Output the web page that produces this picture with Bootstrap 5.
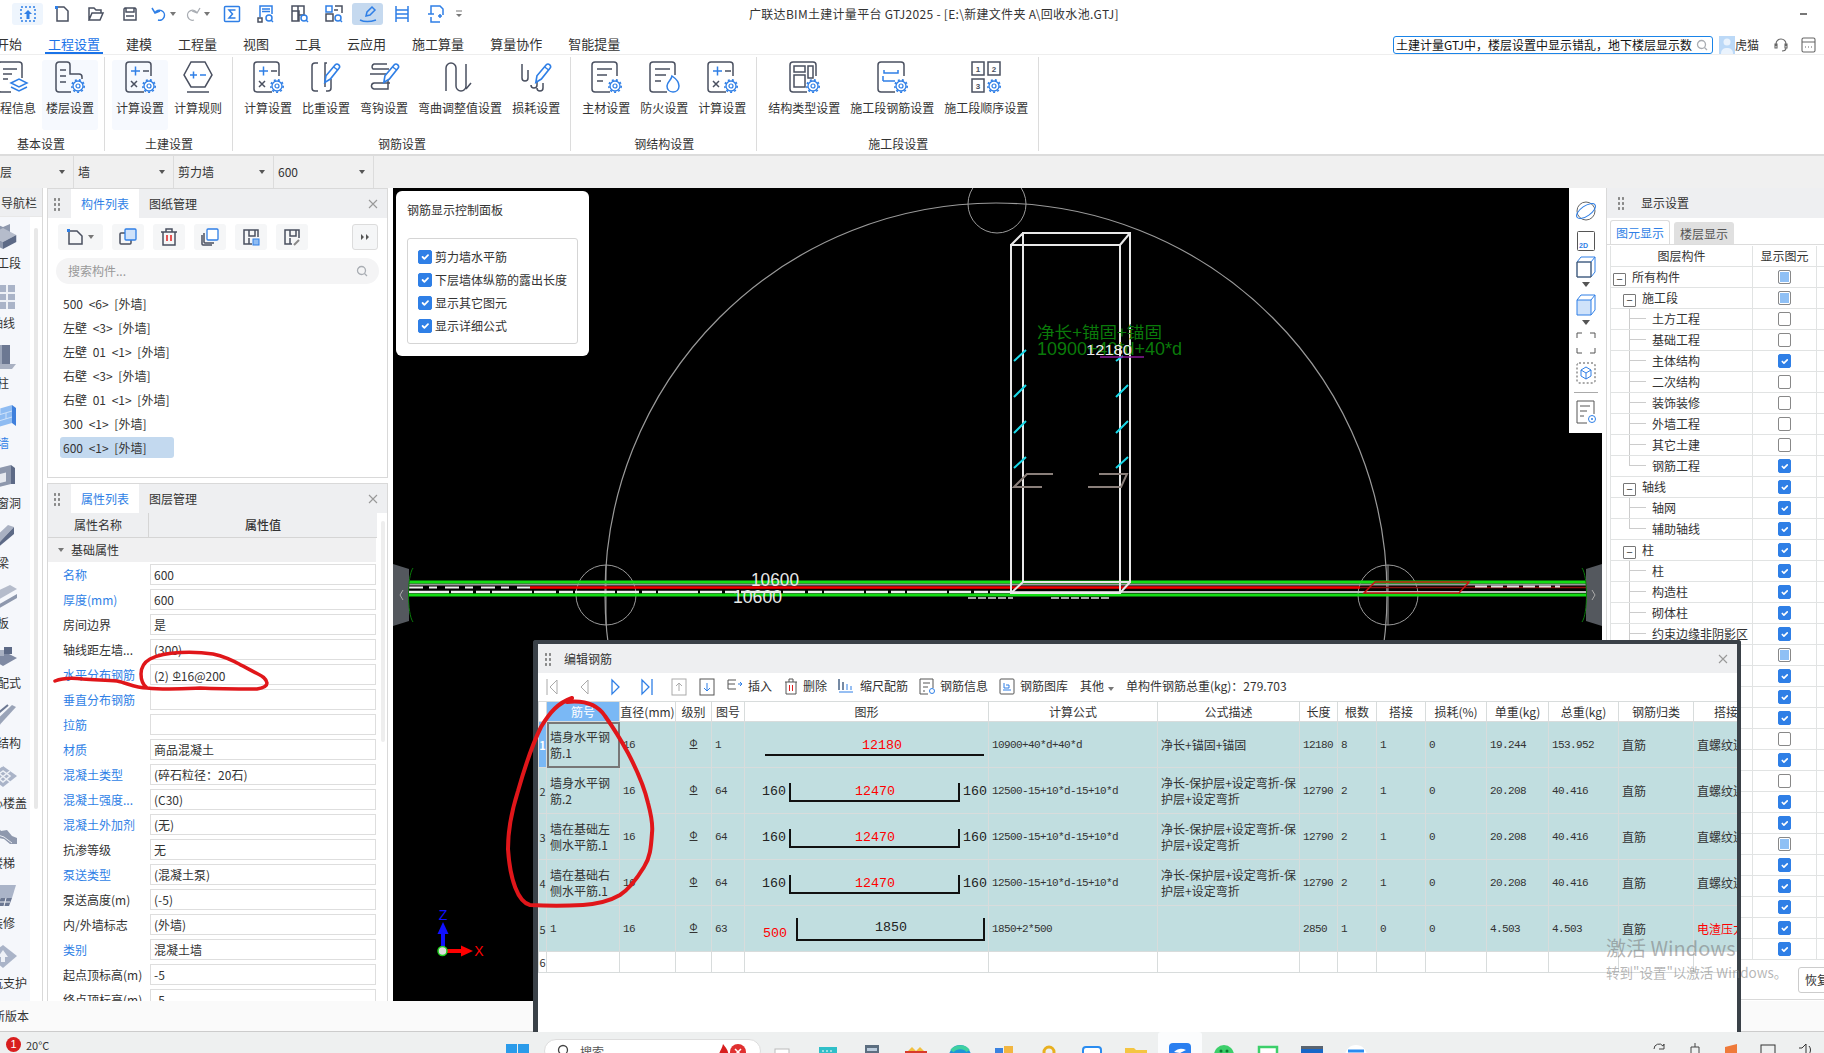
<!doctype html>
<html lang="zh-CN">
<head>
<meta charset="utf-8">
<title>广联达BIM土建计量平台 GTJ2025</title>
<link href="https://cdn.jsdelivr.net/npm/bootstrap@5.3.0/dist/css/bootstrap.min.css" rel="stylesheet">
<style>
html,body{height:100%}
body{width:1824px;height:1053px;overflow:hidden;position:relative;background:#fff;color:#333;font-family:"Noto Sans CJK SC","Liberation Sans",sans-serif;font-size:12px;line-height:16px}
svg{fill:none;flex:none}
.sd{stroke:#4a5060;stroke-width:1.5;fill:none}
.sb{stroke:#2f7fe6;stroke-width:1.5;fill:none}
.sg{stroke:#a9adb3;stroke-width:1.3;fill:none}
.fb{fill:#2f7fe6}.fd{fill:#4a5060}
.sym{font:700 8px "Liberation Sans",sans-serif;fill:#4a5060}
/* title bar */
.titlebar{height:28px}
.qbar{width:470px;gap:0;padding-left:12px}
.qb{width:31px;height:22px;margin-right:3px;border-radius:3px}
.qb-on1{background:#eef5fd}.qb-on2{background:#c5d9ef}
.ddmini{width:0;height:0;border:3px solid transparent;border-top:4px solid #777;margin:3px 0 0 3px}
.apptitle{margin-left:279px;white-space:nowrap;color:#333;font-size:12px;letter-spacing:.3px}
.minbtn{width:7px;height:2px;background:#777;margin-right:17px}
/* menu */
.menubar{height:27px;border-bottom:1px solid #eee}
.menubar .nav-link{padding:0 3px;height:26px;line-height:31px;color:#333;font-size:13px;border-bottom:2px solid transparent}
.menubar .nav-link.active{color:#1a73e8;border-bottom-color:#1a73e8}
.mtabs{margin-left:-7px;gap:20px}
.msearch{width:320px;height:18px;border:1px solid #1a84e8;border-radius:3px;padding:0 4px 0 2px;color:#111;white-space:nowrap;overflow:hidden;margin-top:7px}
.msearch span{overflow:hidden;flex:1}
.avatar{width:16px;height:18px;background:#bcd9f7;margin-left:6px;margin-top:7px}
.uname{width:25px;margin-right:13px;margin-top:7px}
.micon{margin-top:7px}
/* ribbon */
.ribbon{height:101px;border-bottom:2px solid #dcdcdc;overflow:hidden}
.rg{height:94px;margin-top:2px;padding:3px 6px 0 7px;border-right:1px solid #dcdcdc;text-align:center}
.rg-first{margin-left:-23px}
.ritems{gap:2px}
.ri{height:70px;padding:1px 4px 0;border-radius:3px;white-space:nowrap;color:#333}
.ri-on{background:#f6f9fe}
.ri svg{width:34px;height:32px;margin-bottom:7px;margin-left:-8px;margin-right:-8px}
.rgl{margin-top:6px;color:#333}
/* selector */
.selbar{height:32px;background:#f0f0f0}
.sel{width:100px;height:32px;padding:0 4px;border-right:1px solid #dcdcdc;color:#333}
.sel-first{width:74px;padding-left:0}
.caret-d{width:0;height:0;border:3px solid transparent;border-top:4px solid #555;margin-top:3px}
/* main */
.mainarea{height:813px;background:#fff}
.navcol{width:43px;border-right:1px solid #d9d9d9;overflow:hidden}
.navhead{height:29px;line-height:29px;background:#eeeff1;padding-left:1px;border-bottom:1px solid #e8e8e8;white-space:nowrap}
.navbody{height:784px;overflow:hidden}
.navitems{width:30px;background:#f5f7fb;overflow:hidden}
.navit{width:60px;height:60px;margin-left:-27px;padding-top:7px;text-align:center;white-space:nowrap;color:#333}
.navit svg{display:block;margin:0 auto 5px}
.navit-on{color:#2f7fe6}
.navtrack{width:4px;height:581px;background:#e8e8e8;margin:11px 0 0 4px;border-radius:2px}
.leftcol{width:341px;margin-left:4px;margin-right:5px}
.pnl{border:1px solid #d9d9d9;overflow:hidden;background:#fff}
.pnl1{height:290px;margin-bottom:5px}
.pnl2{height:518px;border-bottom:0}
.phead{height:29px;background:#eeeff1;padding-left:5px}
.grip{width:8px;height:14px;margin-right:10px;background:radial-gradient(circle,#888 1.1px,transparent 1.3px) 0 0/4px 5px}
.ptab{height:29px;line-height:29px;width:68px;text-align:center;color:#333}
.ptab-on{background:#fff;color:#2f7fe6}
.ptab-two{margin-left:10px;width:48px}
.xbtn{margin-left:auto;margin-right:8px;width:12px;height:12px}
.ptools{padding:6px 0 0 10px;gap:9px;height:35px}
.tbt{width:32px;height:26px;background:#f5f6f7;border-radius:3px}
.tbt-wide{width:45px;justify-content:flex-start!important;padding-left:8px;gap:4px}
.tbt-more{width:26px;margin-left:35px;border:1px solid #dcdcdc}
.psearch{height:26px;margin:5px 8px 0 8px;border-radius:13px;background:#f4f4f5;color:#999;padding:0 11px 0 12px}
.plist{padding:8px 0 0 12px;margin:0;background:transparent}
.plist .list-group-item{border:0;padding:0 0 0 3px;height:24px;line-height:24px;background:transparent;color:#333;width:114px;white-space:nowrap;border-radius:3px;word-spacing:3px}
.plist .list-group-item.active{background:#c3d9ef;color:#333;height:21px;line-height:21px;margin-top:1px}
.prophead{height:25px;width:329px;background:#eeeff1;border-bottom:1px solid #d5d5d5}
.prophead span:first-child{width:101px;text-align:center;border-right:1px solid #d5d5d5;line-height:24px}
.prophead span:last-child{flex:1;text-align:center;line-height:24px;font-weight:500}
.propwrap{position:relative}
.pscroll{position:absolute;left:333px;top:8px;width:4px;height:221px;background:#eeeeee;border-radius:2px}
.pgroup{height:24px;width:328px;background:#f0f0f1;padding-left:10px;gap:7px}
.caret-s{width:0;height:0;border:3px solid transparent;border-top:4px solid #777;margin-top:3px}
.prow{height:25px;width:328px}
.plabel{width:101px;padding-left:15px;white-space:nowrap;overflow:hidden;color:#333}
.plabel.lk{color:#2f7fe6}
.pval{width:226px;height:21px;border:1px solid #dedede;line-height:19px;padding-left:3px;white-space:nowrap;color:#333;background:#fff;margin-left:1px}
.grade{text-decoration:underline;font-size:10px;vertical-align:2px}
/* canvas */
.canvas{width:1209px;background:#000;position:relative;overflow:hidden}
.canvas>svg{position:absolute;left:0;top:0}
.ctlcard{position:absolute;left:3px;top:3px;width:193px;height:165px;border-radius:6px;border:0;padding:11px 11px}
.ctlbox{margin-top:20px;height:106px;border:1px solid #d5d5d5;border-radius:3px;padding:6px 10px}
.ctlrow{height:23px;gap:3px;white-space:nowrap;margin:0;padding:0;min-height:0}
.ctlrow .form-check-input{float:none;margin:0;width:14px;height:14px;border-radius:2px}
.form-check-input:checked{background-color:#2f7fe6;border-color:#2f7fe6}
.vbar{position:absolute;right:0;top:0;width:33px;height:245px;background:#fff;padding-top:12px}
.vbar svg{display:block;margin:0 auto}
.vdiv{height:1px;background:#aaa;width:24px;margin:8px auto 7px}
.vcaret{width:0;height:0;border:4px solid transparent;border-top:5px solid #555;margin:4px auto 3px}
/* right */
.rightcol{width:218px;margin-left:4px;border-left:1px solid #d9d9d9;overflow:hidden;position:relative}
.rhead{height:30px;background:#eeeff1;padding-left:10px;width:100%}
.rhead .grip{margin-right:16px}
.rtabs{height:27px;padding:2px 0 0 3px;gap:4px;border-bottom:1px solid #dcdcdc;margin-bottom:1px}
.rt1,.rt2{height:24px;line-height:23px;width:60px;text-align:center;border-radius:3px 3px 0 0}
.rt1{border:1px solid #dcdcdc;border-bottom:0;color:#2f7fe6;background:#fff}
.rt2{background:#e0e0e0;color:#555;height:22px;margin-top:2px}
.table.rtb{table-layout:fixed;width:240px;margin:0 0 0 3px;--bs-table-bg:transparent;--bs-table-border-color:#e1e3e3;border-left:1px solid #e1e3e3;border-collapse:separate;border-spacing:0}
.table.rtb>*>*>*{padding:0;height:21px;line-height:20px;border-width:0 1px 1px 0;border-style:solid;border-color:#e1e3e3;color:#333;white-space:nowrap;overflow:hidden;box-shadow:none}
.rtb th{text-align:center;font-weight:400}
.rc1{width:142px}.rc2{width:64px}.rc3{width:34px}
.table.rtb>*>*>.tl{position:relative;text-align:left}
.table.rtb>*>*>.l0{padding-left:2px}.table.rtb>*>*>.l1{padding-left:12px}.table.rtb>*>*>.l2{padding-left:41px}
.tg{display:inline-block;width:13px;height:13px;border:1px solid #777;border-radius:1px;margin-right:6px;line-height:10px;text-align:center;font-style:normal;vertical-align:-2px;font-size:11px;position:relative;background:#fff}
.l2::before{content:"";position:absolute;left:18px;top:0;width:17px;height:50%;border-left:1px solid #ccc;border-bottom:1px solid #ccc}
.l2::after{content:"";position:absolute;left:18px;top:50%;height:50%;border-left:1px solid #ccc}
.l2.lst::after{display:none}
.rtb .form-check-input{float:none;margin:3px auto 0;display:block;width:13px;height:14px;border-radius:2px;border-color:#888}
.rtb .form-check-input:checked{border-color:#2f7fe6}
.part{display:block;width:13px;height:14px;margin:3px auto 0;border:1px solid #888;border-radius:2px;background:#8fc0f5;box-shadow:inset 0 0 0 1px #fff}
.resetrow{height:40px;padding-left:191px;padding-top:7px;border-bottom:1px solid #d9d9d9}
.resetbtn{width:60px;height:26px;padding:0 6px;font-size:12px;line-height:24px;border:1px solid #ccc;border-radius:3px;color:#333;background:#fff;text-align:left;white-space:nowrap}
/* dialog */
.dlg{position:absolute;left:533px;top:640px;width:1208px;height:392px;background:#fff;border:solid #3a4148;border-width:4px 4px 0 5px;border-radius:3px 3px 0 0;z-index:20;overflow:hidden}
.dhead{height:29px;background:#eeeff1;padding-left:6px}
.dhead .grip{margin-right:12px}
.dtools{height:28px;white-space:nowrap;position:relative;color:#333}
.dti{position:absolute;top:5px;line-height:16px}
.table.dtb{table-layout:fixed;width:1244px;margin:0;--bs-table-bg:transparent;--bs-table-border-color:#d8dcdc;border-collapse:collapse}
.table.dtb>*>*>*{padding:0 0 0 3px;border:1px solid #d8dcdc;color:#333;vertical-align:middle;white-space:normal;overflow:hidden;box-shadow:none;line-height:16px;word-break:break-all}
.table.dtb>thead>tr>th{height:20px;text-align:center;font-weight:400;white-space:nowrap;padding:0;background:#fff;line-height:18px}
.dtb tbody tr{height:46px}
.table.dtb tbody tr.cfill>*{background:#c1dee0}
.dtb tbody tr.blank{height:21px}
.table.dtb>*>*>.mn{font-family:"Liberation Mono",monospace;font-size:11px;white-space:nowrap;letter-spacing:-.6px}
.table.dtb>*>*>.nw{white-space:nowrap;font-size:12px}
.table.dtb>*>*>.gr{text-align:center;padding:0;font-family:"Liberation Sans",sans-serif}
.table.dtb>*>*>.rn{padding:0;text-align:center;font-size:11px}
.table.dtb tbody tr>.rn-on{background:#7ab8f5;color:#fff;font-weight:700}
.table.dtb>thead>tr>.hd-on{background:#7ab8f5;color:#fff}
.dtb .sel-cell{outline:2px solid #777;outline-offset:-2px}
.table.dtb>*>*>.red{color:#f00}
.table.dtb>*>*>.sh{padding:0}
.dtb td.sh svg{display:block}
.sht{font:13.3px "Liberation Mono",monospace;fill:#222}
.shr{font:13.3px "Liberation Mono",monospace;fill:#f00}
.c1{width:8px}.c2{width:73px}.c3{width:56px}.c4{width:36px}.c5{width:33px}.c6{width:244px}.c7{width:169px}.c8{width:142px}.c9{width:38px}.c10{width:39px}.c11{width:49px}.c12{width:61px}.c13{width:62px}.c14{width:70px}.c15{width:75px}.c16{width:89px}
/* bottom */
.statusbar{height:31px;background:#fafafa;border-bottom:1px solid #ccc;padding-left:0;line-height:30px;overflow:hidden}
.statusbar span{margin-left:-7px}
.taskbar{height:21px;background:#eef0f0;position:relative;z-index:30;overflow:hidden;padding-top:5px}
.wbadge{width:15px;height:15px;border-radius:50%;background:#d81e1e;color:#fff;text-align:center;font-size:11px;line-height:15px;margin-left:6px;margin-right:5px;font-family:"Liberation Sans",sans-serif;flex:none}
.wtemp{width:28px;font-size:11px;white-space:nowrap;flex:none}
.winlogo{margin-left:452px;margin-top:7px;flex:none}
.tsearch{width:217px;height:24px;margin-left:15px;margin-top:2px;background:#fff;border:1px solid #ddd;border-radius:12px;padding-left:12px;gap:10px;flex:none;color:#555}
.flame{margin-left:auto;margin-right:14px;margin-top:3px}
.tapps{margin-left:1px;flex:none}
.tapp{width:44px;height:24px;flex:none}
.tapp svg{display:block;margin:6px auto 0}
.tapp-on{background:#fbfcfd;border-radius:3px;height:30px;margin-top:-5px}
.tapp-on svg{margin-top:11px}
.ttray{margin-left:auto;gap:22px;padding-right:12px;padding-top:5px}
/* overlays */
.marks{position:absolute;left:0;top:0;width:1824px;height:1053px;z-index:25;pointer-events:none}
.wmark{position:absolute;left:1606px;top:934px;z-index:26;color:rgba(120,120,120,.55);white-space:nowrap;pointer-events:none}
.wm1{font-size:20px;line-height:28px}
.wm2{font-size:13.5px;line-height:20px}
.dti.d1{left:7px}.dti.d2{left:41px}.dti.d3{left:71px}.dti.d4{left:102px}.dti.d5{left:133px}.dti.d6{left:161px}.dti.d7{left:189px}
.dti.t1{left:210px}.dti.d8{left:246px}.dti.t2{left:265px}.dti.d9{left:300px}.dti.t3{left:322px}.dti.d10{left:381px}.dti.t4{left:402px}.dti.d11{left:461px}.dti.t5{left:482px}.dti.t6{left:542px}.dti.t7{left:570px;top:11px}.dti.t8{left:588px}
</style>
</head>
<body class="d-flex flex-column">
<svg width="0" height="0" class="position-absolute">
<defs>
<symbol id="gear" viewBox="0 0 14 14"><circle cx="7" cy="7" r="5" fill="#fff" stroke="#2f7fe6" stroke-width="1.3"/><circle cx="7" cy="7" r="6.2" stroke="#2f7fe6" stroke-width="1.6" stroke-dasharray="2 2.2" fill="none"/><circle cx="7" cy="7" r="2" stroke="#2f7fe6" stroke-width="1.2" fill="none"/></symbol>
<symbol id="pencil" viewBox="0 0 16 20"><path d="M1.500 18.500l1-6L11 2.500a2 2 0 0 1 3 0 2 2 0 0 1 .5 3L6.500 15.500z" fill="#fff" stroke="#2f7fe6" stroke-width="1.5"/><path d="M9.500 4.500l4 3" stroke="#2f7fe6" stroke-width="1.300"/></symbol>
<symbol id="isoblock" viewBox="0 0 30 26"><path d="M0 9 15 1l15 8-15 8z" fill="#b5bccb"/><path d="M0 9l15 8v8L0 17z" fill="#8e98ad"/><path d="M30 9 15 17v8l15-8z" fill="#5d6a86"/></symbol>
</defs>
</svg>

<!-- title bar -->
<div class="titlebar d-flex align-items-center">
  <div class="qbar d-flex align-items-center">
    <div class="qb qb-on1 d-flex align-items-center justify-content-center"><svg width="18" height="18" viewBox="0 0 18 18"><rect x="2" y="2" width="14" height="14" class="sb" stroke-dasharray="2 2"/><path d="M9 5l4 4h-2.500v5h-3V9H5z" class="fb"/></svg></div>
    <div class="qb d-flex align-items-center justify-content-center"><svg width="18" height="18" viewBox="0 0 18 18"><path class="sd" d="M4 2h7l4 4v10H4z"/><path d="M2 1h3v3H2z" class="fb"/></svg></div>
    <div class="qb d-flex align-items-center justify-content-center"><svg width="18" height="18" viewBox="0 0 18 18"><path class="sd" d="M2 15V3h5l2 2h5v3M2 15l3-7h11l-3 7z"/></svg></div>
    <div class="qb d-flex align-items-center justify-content-center"><svg width="18" height="18" viewBox="0 0 18 18"><path class="sd" d="M3 15V4l1-1h10l1 1v11zM5 3v4h8V3M5 11h8"/></svg></div>
    <div class="qb d-flex align-items-center justify-content-center"><svg width="16" height="18" viewBox="0 0 16 18"><path class="sb" d="M4 8a5 5 0 1 1 3 7M1 3l3 5 5-2"/></svg><i class="ddmini"></i></div>
    <div class="qb d-flex align-items-center justify-content-center"><svg width="16" height="18" viewBox="0 0 16 18"><path class="sg" d="M12 8a5 5 0 1 0-3 7M15 3l-3 5-5-2"/></svg><i class="ddmini"></i></div>
    <div class="qb d-flex align-items-center justify-content-center"><svg width="18" height="18" viewBox="0 0 18 18"><rect x="1.500" y="1.500" width="15" height="15" rx="1" class="sb"/><path class="sb" d="M12.500 5H6l3.500 4L6 13h6.500"/></svg></div>
    <div class="qb d-flex align-items-center justify-content-center"><svg width="18" height="18" viewBox="0 0 18 18"><path class="sb" d="M3 12V1h12v8M5 4h8M5 6.500h8"/><rect x="1" y="13" width="4" height="4" class="sd"/><circle cx="12" cy="13" r="3" class="sb"/><path class="sb" d="M14 15l2 2"/></svg></div>
    <div class="qb d-flex align-items-center justify-content-center"><svg width="18" height="18" viewBox="0 0 18 18"><path class="sd" d="M1 1h12v9H8v6H1zM1 6h7v4M7 1v15"/><circle cx="13" cy="13" r="3" class="sb"/><path class="sb" d="M15 15l2 2"/></svg></div>
    <div class="qb d-flex align-items-center justify-content-center"><svg width="18" height="18" viewBox="0 0 18 18"><rect x="1" y="1" width="6" height="6" class="sb"/><path class="sd" d="M10 1h7v7M1 9h7v7H1zM9 5h4"/><circle cx="13" cy="13" r="3" class="sb"/><path class="sb" d="M15 15l2 2"/></svg></div>
    <div class="qb qb-on2 d-flex align-items-center justify-content-center"><svg width="18" height="18" viewBox="0 0 18 18"><path class="sb" d="M1 15c4 2 10 2 16 0M7 11l1-4 5-5 3 3-5 5z"/></svg></div>
    <div class="qb d-flex align-items-center justify-content-center"><svg width="18" height="18" viewBox="0 0 18 18"><path class="sb" d="M3 1v16M15 1v16M3 5h12M3 9h12M3 13h12"/></svg></div>
    <div class="qb d-flex align-items-center justify-content-center"><svg width="18" height="18" viewBox="0 0 18 18"><path class="sb" d="M4 9V1h9l3 3v6M4 12v5h9M13 9v4M11 11h4M1 9h6"/></svg></div>
    <svg width="10" height="12" viewBox="0 0 10 12"><path d="M2 3h6" stroke="#777"/><path d="M2 6l3 3 3-3z" fill="#777"/></svg>
  </div>
  <div class="apptitle">广联达BIM土建计量平台 GTJ2025 - [E:\新建文件夹 A\回收水池.GTJ]</div>
  <div class="minbtn ms-auto"></div>
</div>

<!-- menu bar -->
<div class="menubar d-flex align-items-center">
  <ul class="nav mtabs">
    <li class="nav-item"><a class="nav-link" href="#">开始</a></li>
    <li class="nav-item"><a class="nav-link active" href="#">工程设置</a></li>
    <li class="nav-item"><a class="nav-link" href="#">建模</a></li>
    <li class="nav-item"><a class="nav-link" href="#">工程量</a></li>
    <li class="nav-item"><a class="nav-link" href="#">视图</a></li>
    <li class="nav-item"><a class="nav-link" href="#">工具</a></li>
    <li class="nav-item"><a class="nav-link" href="#">云应用</a></li>
    <li class="nav-item"><a class="nav-link" href="#">施工算量</a></li>
    <li class="nav-item"><a class="nav-link" href="#">算量协作</a></li>
    <li class="nav-item"><a class="nav-link" href="#">智能提量</a></li>
  </ul>
  <div class="msearch d-flex align-items-center ms-auto"><span>土建计量GTJ中，楼层设置中显示错乱，地下楼层显示数</span><svg width="12" height="12" viewBox="0 0 12 12"><circle cx="5.500" cy="5.500" r="4" class="sg"/><path class="sg" d="M8.500 8.500l2.500 2.500"/></svg></div>
  <div class="avatar d-flex justify-content-center"><svg width="12" height="18" viewBox="0 0 12 18"><circle cx="6" cy="6" r="3.500" fill="#eaf3fd"/><path d="M0 18c0-5 3-6 6-6s6 1 6 6z" fill="#eaf3fd"/></svg></div>
  <div class="uname">虎猫</div>
  <svg width="16" height="16" viewBox="0 0 16 16" class="me-2 micon"><path d="M3 9V7a5 5 0 0 1 10 0v2M2 7h2v4H2zM12 7h2v4h-2zM13 11c0 2-2 3-4 3" stroke="#666" stroke-width="1.100" fill="none"/></svg>
  <svg width="15" height="16" viewBox="0 0 15 16" class="ms-1 me-2 micon"><rect x="1" y="1" width="13" height="14" rx="1.500" stroke="#666" stroke-width="1.100"/><path d="M1 5h13M4 10h1M7 10h1M10 10h1" stroke="#666" stroke-width="1.100"/></svg>
</div>

<!-- ribbon -->
<div class="ribbon d-flex">
  <div class="rg rg-first">
    <div class="ritems d-flex">
      <div class="ri d-flex flex-column align-items-center"><svg viewBox="0 0 34 32"><path class="sd" d="M27 17V4a3 3 0 0 0-3-3H6A3 3 0 0 0 3 4v24a3 3 0 0 0 3 3h10"/><path class="sd" d="M8 8h14M8 13h9M8 18h5"/><path class="sb" d="M16 22l8-4 8 4-8 4zM16 26l8 4 8-4"/></svg>工程信息</div>
      <div class="ri ri-on d-flex flex-column align-items-center"><svg viewBox="0 0 34 32"><path class="sd" d="M18 31H6a3 3 0 0 1-3-3V4a3 3 0 0 1 3-3h8a3 3 0 0 1 3 3v9h9a3 3 0 0 1 3 3v2M17 8v5"/><path class="sd" d="M7 9h6M7 15h6M7 21h6"/><use href="#gear" x="18" y="18" width="14" height="14"/></svg>楼层设置</div>
    </div>
    <div class="rgl">基本设置</div>
  </div>
  <div class="rg">
    <div class="ritems d-flex">
      <div class="ri ri-on d-flex flex-column align-items-center"><svg viewBox="0 0 34 32"><path class="sd" d="M28 15V4a3 3 0 0 0-3-3H6A3 3 0 0 0 3 4v24a3 3 0 0 0 3 3h15"/><path class="sb" d="M8 10h9M12.500 5.500v9"/><path class="sd" d="M20 10h6M8 20l6 6M14 20l-6 6"/><use href="#gear" x="19" y="18" width="14" height="14"/></svg>计算设置</div>
      <div class="ri d-flex flex-column align-items-center"><svg viewBox="0 0 34 32"><path class="sd" d="M10 1h14l7 13-7 12H10L3 14zM6 31h22"/><path class="sb" d="M9 14h7M12.500 10.500v7M19 14h6"/></svg>计算规则</div>
    </div>
    <div class="rgl">土建设置</div>
  </div>
  <div class="rg">
    <div class="ritems d-flex">
      <div class="ri d-flex flex-column align-items-center"><svg viewBox="0 0 34 32"><path class="sd" d="M28 15V4a3 3 0 0 0-3-3H6A3 3 0 0 0 3 4v24a3 3 0 0 0 3 3h15"/><path class="sb" d="M8 10h9M12.500 5.500v9"/><path class="sd" d="M20 10h6M8 20l6 6M14 20l-6 6"/><use href="#gear" x="19" y="18" width="14" height="14"/></svg>计算设置</div>
      <div class="ri d-flex flex-column align-items-center"><svg viewBox="0 0 34 32"><path class="sd" d="M9 2H6a3 3 0 0 0-3 3v22a3 3 0 0 0 3 3h3M17 30h2a3 3 0 0 0 3-3V18M18 2h-2v24"/><use href="#pencil" x="14" y="1" width="18" height="22"/></svg>比重设置</div>
      <div class="ri d-flex flex-column align-items-center"><svg viewBox="0 0 34 32"><path class="sd" d="M20 3H7a3 3 0 0 0-1 5h16M3 13h18v15H7a3 3 0 0 1 1-6h15"/><use href="#pencil" x="15" y="1" width="18" height="22"/></svg>弯钩设置</div>
      <div class="ri d-flex flex-column align-items-center"><svg viewBox="0 0 34 32"><path class="sd" d="M3 30V7a5 5 0 0 1 10 0v18a5 5 0 0 0 10 0V3M23 28l5-6"/></svg>弯曲调整值设置</div>
      <div class="ri d-flex flex-column align-items-center"><svg viewBox="0 0 34 32"><path class="sd" d="M3 3v14a3 3 0 0 0 6 0V9M12 24a3 3 0 0 0 6 0v-8M18 27a3 3 0 0 0 6 0V22"/><use href="#pencil" x="15" y="1" width="18" height="22"/></svg>损耗设置</div>
    </div>
    <div class="rgl">钢筋设置</div>
  </div>
  <div class="rg">
    <div class="ritems d-flex">
      <div class="ri d-flex flex-column align-items-center"><svg viewBox="0 0 34 32"><path class="sd" d="M28 15V4a3 3 0 0 0-3-3H6A3 3 0 0 0 3 4v24a3 3 0 0 0 3 3h15"/><path class="sd" d="M8 8h15M8 14h10M8 20h6"/><use href="#gear" x="19" y="18" width="14" height="14"/></svg>主材设置</div>
      <div class="ri d-flex flex-column align-items-center"><svg viewBox="0 0 34 32"><path class="sd" d="M28 14V4a3 3 0 0 0-3-3H6A3 3 0 0 0 3 4v24a3 3 0 0 0 3 3h14"/><path class="sd" d="M8 8h15M8 14h11M8 20h6"/><path class="sb" d="M26 31c-4 0-6-3-6-6 0-4 4-5 5-10 3 2 7 6 7 10 0 4-3 6-6 6z"/></svg>防火设置</div>
      <div class="ri d-flex flex-column align-items-center"><svg viewBox="0 0 34 32"><path class="sd" d="M28 15V4a3 3 0 0 0-3-3H6A3 3 0 0 0 3 4v24a3 3 0 0 0 3 3h15"/><path class="sb" d="M8 10h9M12.500 5.500v9"/><path class="sd" d="M20 10h6M8 20l6 6M14 20l-6 6"/><use href="#gear" x="19" y="18" width="14" height="14"/></svg>计算设置</div>
    </div>
    <div class="rgl">钢结构设置</div>
  </div>
  <div class="rg">
    <div class="ritems d-flex">
      <div class="ri d-flex flex-column align-items-center"><svg viewBox="0 0 34 32"><path class="sd" d="M29 15V4a3 3 0 0 0-3-3H6A3 3 0 0 0 3 4v24a3 3 0 0 0 3 3h14"/><rect x="7" y="5" width="11" height="6" class="sd"/><rect x="21" y="5" width="5" height="12" class="sd"/><rect x="7" y="14" width="11" height="12" class="sd"/><use href="#gear" x="19" y="18" width="14" height="14"/></svg>结构类型设置</div>
      <div class="ri d-flex flex-column align-items-center"><svg viewBox="0 0 34 32"><path class="sd" d="M29 15V4a3 3 0 0 0-3-3H6A3 3 0 0 0 3 4v24a3 3 0 0 0 3 3h14"/><path class="sb" d="M9 9v3h14V9M8 20h12M8 20v-5"/><use href="#gear" x="19" y="18" width="14" height="14"/></svg>施工段钢筋设置</div>
      <div class="ri d-flex flex-column align-items-center"><svg viewBox="0 0 34 32"><rect x="3" y="1" width="12" height="13" class="sd"/><rect x="19" y="1" width="12" height="13" class="sd"/><rect x="3" y="18" width="12" height="13" class="sd"/><text x="9" y="11" text-anchor="middle" class="sym">1</text><text x="25" y="11" text-anchor="middle" class="sym">2</text><text x="9" y="28" text-anchor="middle" class="sym">3</text><use href="#gear" x="18" y="18" width="14" height="14"/></svg>施工段顺序设置</div>
    </div>
    <div class="rgl">施工段设置</div>
  </div>
</div>

<!-- selector bar -->
<div class="selbar d-flex">
  <div class="sel sel-first d-flex align-items-center justify-content-between"><span class="ms-n1">层</span><i class="caret-d me-1"></i></div>
  <div class="sel d-flex align-items-center justify-content-between"><span>墙</span><i class="caret-d me-1"></i></div>
  <div class="sel d-flex align-items-center justify-content-between"><span>剪力墙</span><i class="caret-d me-1"></i></div>
  <div class="sel d-flex align-items-center justify-content-between"><span>600</span><i class="caret-d me-1"></i></div>
</div>

<!-- main -->
<div class="mainarea d-flex">
  <div class="navcol">
    <div class="navhead">导航栏</div>
    <div class="navbody d-flex">
      <div class="navitems">
        <div class="navit"><svg width="30" height="26" viewBox="0 0 30 26"><path d="M8 0l7 3 7-3v8l-7 4-7-4z" fill="#8e98ad"/><use href="#isoblock" y="3" width="30" height="23"/></svg>施工段</div>
        <div class="navit"><svg width="30" height="26" viewBox="0 0 30 26"><rect x="3" y="1" width="24" height="24" fill="#aab4c8"/><path d="M3 9h24M3 17h24M11 1v24M19 1v24" stroke="#eef1f6" stroke-width="2"/></svg>轴线</div>
        <div class="navit"><svg width="30" height="26" viewBox="0 0 30 26"><path d="M8 1h14v19H8z" fill="#6c7892"/><path d="M8 1h6v19H8z" fill="#9aa4b8"/><path d="M2 20h26l-4 5H6z" fill="#a9b1c2"/></svg>柱</div>
        <div class="navit navit-on"><svg width="30" height="26" viewBox="0 0 30 26"><path d="M4 7 24 1v18L4 25z" fill="#8fbcf2"/><path d="M24 1l4 3v18l-4-3z" fill="#3f80dc"/><path d="M4 13l20-6M4 19l20-6M12 4v6M18 9v6M10 16v6" stroke="#cfe2fa"/></svg>墙</div>
        <div class="navit"><svg width="30" height="26" viewBox="0 0 30 26"><path d="M3 6l20-5v19L3 25z" fill="#8e98ad"/><path d="M23 1l4 3v16l-4 0z" fill="#5d6a86"/><path d="M8 11l10-2.500v9L8 20z" fill="#e6e9ef"/></svg>门窗洞</div>
        <div class="navit"><svg width="30" height="26" viewBox="0 0 30 26"><path d="M2 18 20 1l6 2L8 22z" fill="#a9b1c2"/><path d="M8 22 26 3v7L8 25z" fill="#5d6a86"/></svg>梁</div>
        <div class="navit"><svg width="30" height="26" viewBox="0 0 30 26"><path d="M1 11 22 1l7 4L10 16z" fill="#b5bccb"/><path d="M1 15l9 6 19-11v4L10 25l-9-6z" fill="#8e98ad"/></svg>板</div>
        <div class="navit"><svg width="30" height="26" viewBox="0 0 30 26"><path d="M1 14l14-7 14 7-14 8z" fill="#7f8aa3"/><path d="M6 6h10v6H6z" fill="#a9b1c2"/><path d="M16 3h8v7h-8z" fill="#5d6a86"/></svg>装配式</div>
        <div class="navit"><svg width="30" height="26" viewBox="0 0 30 26"><path d="M2 22 24 1l4 2L8 25z" fill="#9aa4b8"/><path d="M2 16 20 1" stroke="#6c7892" stroke-width="2"/></svg>钢结构</div>
        <div class="navit"><svg width="30" height="26" viewBox="0 0 30 26"><path d="M15 2 29 12 15 23 1 12z" fill="#aab4c8"/><path d="M8 7l14 11M15 2l-1 0M22 7 8 18M15 7 8 12l7 6 7-6z" stroke="#eef1f6" stroke-width="1.500"/></svg>空心楼盖</div>
        <div class="navit"><svg width="30" height="26" viewBox="0 0 30 26"><path d="M2 4l6-3 5 6 6-1 5 6 5 2v6H22l-6-5-6-1-5-5-3-1z" fill="#8e98ad"/><path d="M2 4l8 7 6 2 8 6" stroke="#e8ebf1"/></svg>楼梯</div>
        <div class="navit"><svg width="30" height="26" viewBox="0 0 30 26"><path d="M1 14 6 1h22l-4 13z" fill="#aab4c8"/><path d="M1 14h23l-3 8H4z" fill="#6c7892"/><path d="M6 14l-2 8M12 14l-2 8M18 14l-2 8M2 18h20" stroke="#eef1f6"/></svg>装修</div>
        <div class="navit"><svg width="30" height="26" viewBox="0 0 30 26"><path d="M15 1l14 11-14 12L1 12z" fill="#aab4c8"/><path d="M15 6l5 7h-3v5h-4v-5h-3z" fill="#eef1f6"/></svg>基坑支护</div>
      </div>
      <div class="navtrack"></div>
    </div>
  </div>

  <div class="leftcol">
    <div class="pnl pnl1">
      <div class="phead d-flex align-items-center"><i class="grip"></i><div class="ptab ptab-on">构件列表</div><div class="ptab ptab-two">图纸管理</div><svg class="xbtn" viewBox="0 0 12 12"><path d="M2 2l8 8M10 2l-8 8" stroke="#999" stroke-width="1.100"/></svg></div>
      <div class="ptools d-flex">
        <div class="tbt tbt-wide d-flex align-items-center justify-content-center"><svg width="18" height="18" viewBox="0 0 18 18"><path class="sd" d="M3 3h8l5 5v8H3z"/><path d="M1 1h3v3H1z" class="fb"/></svg><i class="caret-s"></i></div>
        <div class="tbt d-flex align-items-center justify-content-center"><svg width="18" height="18" viewBox="0 0 18 18"><rect x="1" y="5" width="11" height="11" rx="1" class="sd"/><rect x="6" y="1" width="11" height="11" rx="1" fill="#cfe2fa" stroke="#2f7fe6" stroke-width="1.300"/></svg></div>
        <div class="tbt d-flex align-items-center justify-content-center"><svg width="18" height="18" viewBox="0 0 18 18"><path class="sd" d="M1 4h16M6 4V1h6v3M3 4v13h12V4"/><path d="M7 7v6M11 7v6" stroke="#e02020" stroke-width="1.500"/></svg></div>
        <div class="tbt d-flex align-items-center justify-content-center"><svg width="18" height="18" viewBox="0 0 18 18"><path class="sd" d="M1 7v9a1 1 0 0 0 1 1h9M3 5v9a1 1 0 0 0 1 1h9"/><rect x="6" y="1" width="11" height="11" rx="1" fill="#fff" stroke="#2f7fe6" stroke-width="1.300"/></svg></div>
        <div class="tbt d-flex align-items-center justify-content-center"><svg width="18" height="18" viewBox="0 0 18 18"><path class="sd" d="M10 16H2V2h14v7M7 2v6h6V2M7 16v-6"/><rect x="11" y="11" width="6" height="6" fill="#8fbcf2" stroke="#2f7fe6"/></svg></div>
        <div class="tbt d-flex align-items-center justify-content-center"><svg width="18" height="18" viewBox="0 0 18 18"><path class="sd" d="M9 16H2V2h14v8M7 2v6h6V2M7 16v-6"/><path d="M11 17l5-5" stroke="#888" stroke-width="2"/></svg></div>
        <div class="tbt tbt-more d-flex align-items-center justify-content-center"><svg width="10" height="8" viewBox="0 0 10 8"><path d="M1 1l3 3-3 3zM6 1l3 3-3 3z" fill="#555"/></svg></div>
      </div>
      <div class="psearch d-flex align-items-center justify-content-between"><span>搜索构件...</span><svg width="12" height="12" viewBox="0 0 12 12"><circle cx="5.500" cy="5.500" r="4" class="sg"/><path class="sg" d="M8.500 8.500l2.500 2.500"/></svg></div>
      <ul class="list-group plist">
        <li class="list-group-item">500 &lt;6&gt; [外墙]</li>
        <li class="list-group-item">左壁 &lt;3&gt; [外墙]</li>
        <li class="list-group-item">左壁 01 &lt;1&gt; [外墙]</li>
        <li class="list-group-item">右壁 &lt;3&gt; [外墙]</li>
        <li class="list-group-item">右壁 01 &lt;1&gt; [外墙]</li>
        <li class="list-group-item">300 &lt;1&gt; [外墙]</li>
        <li class="list-group-item active">600 &lt;1&gt; [外墙]</li>
      </ul>
    </div>
    <div class="pnl pnl2">
      <div class="phead d-flex align-items-center"><i class="grip"></i><div class="ptab ptab-on">属性列表</div><div class="ptab ptab-two">图层管理</div><svg class="xbtn" viewBox="0 0 12 12"><path d="M2 2l8 8M10 2l-8 8" stroke="#999" stroke-width="1.100"/></svg></div>
      <div class="propwrap">
        <div class="pscroll"></div>
        <div class="prophead d-flex"><span>属性名称</span><span>属性值</span></div>
        <div class="pgroup d-flex align-items-center"><i class="caret-s"></i>基础属性</div>
        <div class="prow d-flex align-items-center"><div class="plabel lk">名称</div><div class="pval">600</div></div>
        <div class="prow d-flex align-items-center"><div class="plabel lk">厚度(mm)</div><div class="pval">600</div></div>
        <div class="prow d-flex align-items-center"><div class="plabel">房间边界</div><div class="pval">是</div></div>
        <div class="prow d-flex align-items-center"><div class="plabel">轴线距左墙...</div><div class="pval">(300)</div></div>
        <div class="prow d-flex align-items-center"><div class="plabel lk">水平分布钢筋</div><div class="pval">(2)<span class="grade ms-1">Φ</span>16@200</div></div>
        <div class="prow d-flex align-items-center"><div class="plabel lk">垂直分布钢筋</div><div class="pval"></div></div>
        <div class="prow d-flex align-items-center"><div class="plabel lk">拉筋</div><div class="pval"></div></div>
        <div class="prow d-flex align-items-center"><div class="plabel lk">材质</div><div class="pval">商品混凝土</div></div>
        <div class="prow d-flex align-items-center"><div class="plabel lk">混凝土类型</div><div class="pval">(碎石粒径：20石)</div></div>
        <div class="prow d-flex align-items-center"><div class="plabel lk">混凝土强度...</div><div class="pval">(C30)</div></div>
        <div class="prow d-flex align-items-center"><div class="plabel lk">混凝土外加剂</div><div class="pval">(无)</div></div>
        <div class="prow d-flex align-items-center"><div class="plabel">抗渗等级</div><div class="pval">无</div></div>
        <div class="prow d-flex align-items-center"><div class="plabel lk">泵送类型</div><div class="pval">(混凝土泵)</div></div>
        <div class="prow d-flex align-items-center"><div class="plabel">泵送高度(m)</div><div class="pval">(-5)</div></div>
        <div class="prow d-flex align-items-center"><div class="plabel">内/外墙标志</div><div class="pval">(外墙)</div></div>
        <div class="prow d-flex align-items-center"><div class="plabel lk">类别</div><div class="pval">混凝土墙</div></div>
        <div class="prow d-flex align-items-center"><div class="plabel">起点顶标高(m)</div><div class="pval">-5</div></div>
        <div class="prow d-flex align-items-center"><div class="plabel">终点顶标高(m)</div><div class="pval">-5</div></div>
      </div>
    </div>
  </div>

  <div class="canvas">
    <svg width="1209" height="813" viewBox="393 188 1209 813">
      <circle cx="996" cy="594" r="391" stroke="#9a9a9a" stroke-width="1.200"/>
      <circle cx="997" cy="204" r="29" stroke="#9a9a9a"/>
      <ellipse cx="606" cy="595" rx="30" ry="30" stroke="#9a9a9a"/>
      <ellipse cx="1388" cy="595" rx="30" ry="30" stroke="#9a9a9a"/>
      <path d="M606 565v60M1388 565v60" stroke="#9a9a9a"/>
      <path d="M409 584.500H1586" stroke="#9a9a9a" stroke-width="2"/>
      <path d="M409 592H1011" stroke="#eee" stroke-width="2.500" stroke-dasharray="40 2 22 3 14 2"/>
      <path d="M1011 592H1586" stroke="#bbb" stroke-width="2"/>
      <path d="M409 587.500H530" stroke="#eee" stroke-width="2" stroke-dasharray="14 6 8 8"/>
      <path d="M530 587.500H1360" stroke="#f00000" stroke-width="2.500"/>
      <path d="M1360 587.500H1586" stroke="#8a1010" stroke-width="1.500"/>
      <path d="M1475 586.500H1560" stroke="#ddd" stroke-width="2" stroke-dasharray="12 4"/>
      <path d="M409 582H1586M409 595H1586" stroke="#14dc14" stroke-width="3"/>
      <path d="M968 598h45M1051 598h58" stroke="#ddd" stroke-width="1.500" stroke-dasharray="8 2"/>
      <path d="M1364 593l11-11h94l-10 11z" stroke="#c81212" stroke-width="1.500"/>
      <g stroke="#e8e8e8" stroke-width="2"><path d="M1011 245h109v348h-109zM1023 233h107v349h-107zM1011 245l12-12M1120 245l10-12M1011 593l12-11M1120 593l10-11"/></g>
      <g stroke="#18d8e8" stroke-width="2"><path d="M1014 361l12-11M1014 397l12-12M1014 433l12-12M1014 468l12-11M1116 361l7-5M1116 397l12-12M1116 433l12-12M1116 468l12-11"/></g>
      <path d="M1053 474h-26l-13 13h28M1088 487h33l6-13h-28" stroke="#8a7f7a" stroke-width="2"/>
      <text x="1037" y="338" fill="#0a7a0a" font-family="Noto Sans CJK SC,sans-serif" font-size="16" textLength="125" lengthAdjust="spacingAndGlyphs">净长+锚固+锚固</text>
      <text x="1037" y="355" fill="#0a7a0a" font-family="Liberation Sans,sans-serif" font-size="18" textLength="145" lengthAdjust="spacingAndGlyphs">10900+40*d+40*d</text>
      <text x="1086" y="355" fill="#eee" font-family="Liberation Sans,sans-serif" font-size="15" textLength="46" lengthAdjust="spacingAndGlyphs">12180</text>
      <path d="M1100 357h44" stroke="#8a1a9a" stroke-width="1.500"/>
      <text x="751" y="586" fill="#e8e8e8" font-family="Liberation Sans,sans-serif" font-size="18" textLength="48" lengthAdjust="spacingAndGlyphs">10600</text>
      <text x="733" y="603" fill="#e8e8e8" font-family="Liberation Sans,sans-serif" font-size="18" textLength="49" lengthAdjust="spacingAndGlyphs">10600</text>
      <path d="M393 564l16 5v52l-16 5z" fill="#54585e"/>
      <path d="M403 590l-3 5 3 5" stroke="#aaa"/>
      <path d="M1602 564l-16 5v52l16 5z" fill="#54585e"/>
      <path d="M1592 590l3 5-3 5" stroke="#aaa"/>
      <path d="M413 568c-6 8-6 46 0 54M1582 568c6 8 6 46 0 54" stroke="#0a7a0a"/>
      <path d="M443 950v-22" stroke="#1010ff" stroke-width="4"/><path d="M443 922l-5.500 12h11z" fill="#1010ff"/>
      <path d="M446 951h18" stroke="#f00" stroke-width="4"/><path d="M473 951l-12-5.500v11z" fill="#f00"/>
      <circle cx="442.500" cy="951" r="4.500" fill="#ddd" stroke="#1ed01e" stroke-width="1.500"/>
      <text x="443" y="920" text-anchor="middle" fill="#1010ff" font-family="Liberation Sans,sans-serif" font-size="14">Z</text>
      <text x="479" y="956" text-anchor="middle" fill="#f00" font-family="Liberation Sans,sans-serif" font-size="14">X</text>
    </svg>
    <div class="card ctlcard">
      <div>钢筋显示控制面板</div>
      <div class="ctlbox">
        <label class="form-check ctlrow d-flex align-items-center"><input class="form-check-input" type="checkbox" checked>剪力墙水平筋</label>
        <label class="form-check ctlrow d-flex align-items-center"><input class="form-check-input" type="checkbox" checked>下层墙体纵筋的露出长度</label>
        <label class="form-check ctlrow d-flex align-items-center"><input class="form-check-input" type="checkbox" checked>显示其它图元</label>
        <label class="form-check ctlrow d-flex align-items-center"><input class="form-check-input" type="checkbox" checked>显示详细公式</label>
      </div>
    </div>
    <div class="vbar">
      <svg width="22" height="22" viewBox="0 0 22 22"><ellipse cx="11" cy="11" rx="9" ry="9" stroke="#666"/><ellipse cx="11" cy="11" rx="11" ry="5" transform="rotate(-35 11 11)" stroke="#2f7fe6"/></svg>
      <svg class="mt-2" width="20" height="22" viewBox="0 0 20 22"><rect x="1.500" y="1.500" width="17" height="19" rx="1" stroke="#555"/><text x="3" y="18" font-family="Liberation Sans,sans-serif" font-size="7" font-weight="700" fill="#2f7fe6">2D</text></svg>
      <svg class="mt-1" width="20" height="22" viewBox="0 0 20 22"><path d="M1 6h14v15H1zM1 6l4-5h14l-4 5M15 21l4-5V1" stroke="#2f7fe6"/><path d="M1 6h14v15H1z" stroke="#555"/></svg>
      <div class="vcaret"></div>
      <svg width="20" height="22" viewBox="0 0 20 22"><path d="M1 6h14v15H1z" fill="#cfe2fa" stroke="#2f7fe6"/><path d="M1 6l4-5h14l-4 5M15 21l4-5V1" stroke="#2f7fe6"/></svg>
      <div class="vcaret"></div>
      <svg width="20" height="22" viewBox="0 0 20 22"><path d="M1 6V1h5M14 1h5v5M19 16v5h-5M6 21H1v-5" stroke="#555"/></svg>
      <svg class="mt-2" width="20" height="22" viewBox="0 0 20 22"><rect x="1" y="1" width="18" height="20" rx="2" stroke="#555" stroke-dasharray="2 2"/><path d="M10 5l5 3v6l-5 3-5-3V8zM5 8l5 3 5-3M10 11v6" stroke="#2f7fe6"/></svg>
      <div class="vdiv"></div>
      <svg width="22" height="24" viewBox="0 0 22 24"><path d="M19 14V1H2v22h10M5 6h10M5 11h7M5 16h4" stroke="#555"/><circle cx="17" cy="19" r="3.500" stroke="#2f7fe6"/><circle cx="17" cy="19" r="1" fill="#2f7fe6"/></svg>
    </div>
  </div>

  <div class="rightcol">
    <div class="rhead d-flex align-items-center"><i class="grip"></i>显示设置</div>
    <div class="rtabs d-flex"><div class="rt1">图元显示</div><div class="rt2">楼层显示</div></div>
    <table class="table rtb">
      <colgroup><col class="rc1"><col class="rc2"><col class="rc3"></colgroup>
      <thead><tr><th>图层构件</th><th>显示图元</th><th></th></tr></thead>
      <tbody>
        <tr><td class="tl l0"><i class="tg">−</i>所有构件</td><td><span class="part"></span></td><td></td></tr>
        <tr><td class="tl l1"><i class="tg">−</i>施工段</td><td><span class="part"></span></td><td></td></tr>
        <tr><td class="tl l2">土方工程</td><td><input class="form-check-input" type="checkbox"></td><td></td></tr>
        <tr><td class="tl l2">基础工程</td><td><input class="form-check-input" type="checkbox"></td><td></td></tr>
        <tr><td class="tl l2">主体结构</td><td><input class="form-check-input" type="checkbox" checked></td><td></td></tr>
        <tr><td class="tl l2">二次结构</td><td><input class="form-check-input" type="checkbox"></td><td></td></tr>
        <tr><td class="tl l2">装饰装修</td><td><input class="form-check-input" type="checkbox"></td><td></td></tr>
        <tr><td class="tl l2">外墙工程</td><td><input class="form-check-input" type="checkbox"></td><td></td></tr>
        <tr><td class="tl l2">其它土建</td><td><input class="form-check-input" type="checkbox"></td><td></td></tr>
        <tr><td class="tl l2 lst">钢筋工程</td><td><input class="form-check-input" type="checkbox" checked></td><td></td></tr>
        <tr><td class="tl l1"><i class="tg">−</i>轴线</td><td><input class="form-check-input" type="checkbox" checked></td><td></td></tr>
        <tr><td class="tl l2">轴网</td><td><input class="form-check-input" type="checkbox" checked></td><td></td></tr>
        <tr><td class="tl l2 lst">辅助轴线</td><td><input class="form-check-input" type="checkbox" checked></td><td></td></tr>
        <tr><td class="tl l1"><i class="tg">−</i>柱</td><td><input class="form-check-input" type="checkbox" checked></td><td></td></tr>
        <tr><td class="tl l2">柱</td><td><input class="form-check-input" type="checkbox" checked></td><td></td></tr>
        <tr><td class="tl l2">构造柱</td><td><input class="form-check-input" type="checkbox" checked></td><td></td></tr>
        <tr><td class="tl l2">砌体柱</td><td><input class="form-check-input" type="checkbox" checked></td><td></td></tr>
        <tr><td class="tl l2">约束边缘非阴影区</td><td><input class="form-check-input" type="checkbox" checked></td><td></td></tr>
        <tr><td class="tl"></td><td><span class="part"></span></td><td></td></tr>
        <tr><td class="tl"></td><td><input class="form-check-input" type="checkbox" checked></td><td></td></tr>
        <tr><td class="tl"></td><td><input class="form-check-input" type="checkbox" checked></td><td></td></tr>
        <tr><td class="tl"></td><td><input class="form-check-input" type="checkbox" checked></td><td></td></tr>
        <tr><td class="tl"></td><td><input class="form-check-input" type="checkbox"></td><td></td></tr>
        <tr><td class="tl"></td><td><input class="form-check-input" type="checkbox" checked></td><td></td></tr>
        <tr><td class="tl"></td><td><input class="form-check-input" type="checkbox"></td><td></td></tr>
        <tr><td class="tl"></td><td><input class="form-check-input" type="checkbox" checked></td><td></td></tr>
        <tr><td class="tl"></td><td><input class="form-check-input" type="checkbox" checked></td><td></td></tr>
        <tr><td class="tl"></td><td><span class="part"></span></td><td></td></tr>
        <tr><td class="tl"></td><td><input class="form-check-input" type="checkbox" checked></td><td></td></tr>
        <tr><td class="tl"></td><td><input class="form-check-input" type="checkbox" checked></td><td></td></tr>
        <tr><td class="tl"></td><td><input class="form-check-input" type="checkbox" checked></td><td></td></tr>
        <tr><td class="tl"></td><td><input class="form-check-input" type="checkbox" checked></td><td></td></tr>
        <tr><td class="tl"></td><td><input class="form-check-input" type="checkbox" checked></td><td></td></tr>
      </tbody>
    </table>
    <div class="resetrow"><button class="btn resetbtn" type="button">恢复默认</button></div>
  </div>
</div>

<div class="statusbar"><span>新版本</span></div>
<div class="taskbar d-flex">
  <div class="wbadge">1</div><div class="wtemp">20°C</div>
  <svg class="winlogo" width="23" height="23" viewBox="0 0 23 23"><path d="M0 0h11v11H0zM12 0h11v11H12zM0 12h11v11H0zM12 12h11v11H12z" fill="#2a9bea"/></svg>
  <div class="tsearch d-flex align-items-start"><svg class="mt-1" width="13" height="13" viewBox="0 0 13 13"><circle cx="6" cy="6" r="4.500" stroke="#444" stroke-width="1.300"/></svg><span class="mt-1">搜索</span>
    <svg class="flame" width="30" height="18" viewBox="0 0 30 18"><path d="M3 18C1 10 6 7 7 1c3 4 7 7 5 17z" fill="#d81e1e"/><circle cx="22" cy="9" r="8" fill="#e03030"/><path d="M19 6l6 6M25 6l-6 6" stroke="#fff" stroke-width="1.500"/></svg>
  </div>
  <div class="tapps d-flex">
    <div class="tapp"><svg width="22" height="22" viewBox="0 0 22 22"><rect x="2" y="6" width="14" height="16" fill="#fff" stroke="#bbb"/><rect x="8" y="10" width="12" height="12" fill="#555"/></svg></div>
    <div class="tapp"><svg width="22" height="22" viewBox="0 0 22 22"><rect x="2" y="4" width="18" height="18" fill="#2fbfc8"/><path d="M5 8h2M9 8h2M13 8h2" stroke="#fff"/></svg></div>
    <div class="tapp"><svg width="22" height="22" viewBox="0 0 22 22"><rect x="4" y="2" width="14" height="20" fill="#5c6e80"/><rect x="6" y="5" width="10" height="3" fill="#bcd"/></svg></div>
    <div class="tapp"><svg width="24" height="22" viewBox="0 0 24 22"><rect x="1" y="8" width="22" height="14" fill="#d83a2a"/><path d="M4 8l4-4 4 4 4-4 4 4" fill="#f2c040"/></svg></div>
    <div class="tapp"><svg width="22" height="22" viewBox="0 0 22 22"><circle cx="11" cy="13" r="11" fill="#1d96d8"/><path d="M3 8c4-5 13-5 16 0" stroke="#3fd0a0" stroke-width="4"/></svg></div>
    <div class="tapp"><svg width="22" height="22" viewBox="0 0 22 22"><rect x="2" y="5" width="8" height="17" fill="#3a82e0"/><rect x="11" y="3" width="9" height="19" fill="#f2b640"/></svg></div>
    <div class="tapp"><svg width="20" height="22" viewBox="0 0 20 22"><circle cx="11" cy="9" r="5" stroke="#e8b020" stroke-width="3"/><path d="M8 13l-5 8" stroke="#e8b020" stroke-width="3"/></svg></div>
    <div class="tapp"><svg width="22" height="22" viewBox="0 0 22 22"><rect x="2" y="4" width="18" height="18" rx="3" fill="#fff" stroke="#2a8cf0" stroke-width="2"/></svg></div>
    <div class="tapp"><svg width="24" height="22" viewBox="0 0 24 22"><path d="M1 5h9l2 2h11v15H1z" fill="#f4c542"/></svg></div>
    <div class="tapp tapp-on"><svg width="22" height="22" viewBox="0 0 22 22"><rect x="0" y="0" width="22" height="22" rx="4" fill="#2a7ff0"/><path d="M5 9c4-4 8-4 12-2l-6 3z" fill="#fff"/></svg></div>
    <div class="tapp"><svg width="20" height="22" viewBox="0 0 20 22"><circle cx="10" cy="12" r="10" fill="#3ccf6a"/><circle cx="7" cy="8" r="1.500" fill="#0a7a30"/><circle cx="13" cy="8" r="1.500" fill="#0a7a30"/></svg></div>
    <div class="tapp"><svg width="22" height="22" viewBox="0 0 22 22"><rect x="2" y="4" width="18" height="18" fill="#fff" stroke="#3ccf6a" stroke-width="2.500"/></svg></div>
    <div class="tapp"><svg width="24" height="22" viewBox="0 0 24 22"><rect x="1" y="3" width="22" height="19" fill="#1767c8"/><rect x="1" y="3" width="22" height="3" fill="#5a6470"/></svg></div>
    <div class="tapp"><svg width="22" height="22" viewBox="0 0 22 22"><circle cx="11" cy="13" r="11" fill="#fff"/><path d="M3 8h16" stroke="#2a8cf0" stroke-width="3"/></svg></div>
  </div>
  <div class="ttray d-flex">
    <svg width="14" height="14" viewBox="0 0 14 14"><path d="M2 7a5 5 0 0 1 9-3l1-2v5H7" stroke="#444"/></svg>
    <svg width="14" height="14" viewBox="0 0 14 14"><path d="M3 5h8v9H3zM7 1v4" stroke="#444"/></svg>
    <svg width="14" height="14" viewBox="0 0 14 14"><path d="M1 5l12-3v12H1z" fill="#ef7a3a"/></svg>
    <svg width="16" height="14" viewBox="0 0 16 14"><rect x="1" y="3" width="14" height="11" stroke="#333"/></svg>
    <svg width="14" height="14" viewBox="0 0 14 14"><path d="M1 6h3l4-4v12M11 4c2 2 2 6 0 8" stroke="#333"/></svg>
  </div>
</div>

<!-- rebar dialog -->
<div class="dlg">
  <div class="dhead d-flex align-items-center"><i class="grip"></i>编辑钢筋<svg class="xbtn" viewBox="0 0 12 12"><path d="M2 2l8 8M10 2l-8 8" stroke="#999" stroke-width="1.100"/></svg></div>
  <div class="dtools">
    <svg class="dti d1" width="14" height="18" viewBox="0 0 14 18"><path d="M2 1v16M12 2L5 9l7 7z" stroke="#aaa"/></svg>
    <svg class="dti d2" width="12" height="18" viewBox="0 0 12 18"><path d="M9 2L2 9l7 7z" stroke="#aaa"/></svg>
    <svg class="dti d3" width="12" height="18" viewBox="0 0 12 18"><path d="M3 2l7 7-7 7z" stroke="#2f7fe6" stroke-width="1.300"/></svg>
    <svg class="dti d4" width="14" height="18" viewBox="0 0 14 18"><path d="M2 2l7 7-7 7zM12 1v16" stroke="#2f7fe6" stroke-width="1.300"/></svg>
    <svg class="dti d5" width="16" height="18" viewBox="0 0 16 18"><rect x="1" y="1" width="14" height="16" stroke="#aaa"/><path d="M8 13V5M5 8l3-3 3 3" stroke="#aaa"/></svg>
    <svg class="dti d6" width="16" height="18" viewBox="0 0 16 18"><rect x="1" y="1" width="14" height="16" stroke="#555"/><path d="M8 5v8M5 10l3 3 3-3" stroke="#2f7fe6"/></svg>
    <svg class="dti d7" width="16" height="16" viewBox="0 0 16 16"><path d="M9 2H1v9h8M1 6h7" stroke="#555"/><path d="M11 6h4M13 4l2 2-2 2" stroke="#2f7fe6"/></svg>
    <span class="dti t1">插入</span>
    <svg class="dti d8" width="14" height="17" viewBox="0 0 14 17"><path d="M1 4h12M5 4V1h4v3M2 4v12h10V4" stroke="#555"/><path d="M5.500 7v6M8.500 7v6" stroke="#e02020"/></svg>
    <span class="dti t2">删除</span>
    <svg class="dti d9" width="16" height="16" viewBox="0 0 16 16"><path d="M1 1v11M5 4v8M9 6v6M13 8v4M1 14h14" stroke="#2f7fe6"/><path d="M1 1v11M5 4v8" stroke="#555"/></svg>
    <span class="dti t3">缩尺配筋</span>
    <svg class="dti d10" width="16" height="17" viewBox="0 0 16 17"><path d="M14 10V1H1v15h8M4 5h7M4 9h5M4 13h2" stroke="#555"/><circle cx="13" cy="13" r="2.500" stroke="#2f7fe6"/></svg>
    <span class="dti t4">钢筋信息</span>
    <svg class="dti d11" width="16" height="17" viewBox="0 0 16 17"><rect x="1" y="1" width="14" height="15" rx="1" stroke="#555"/><path d="M4 12h8M5 5v5h5V7H7" stroke="#2f7fe6"/></svg>
    <span class="dti t5">钢筋图库</span>
    <span class="dti t6">其他</span><i class="dti caret-s t7"></i>
    <span class="dti t8">单构件钢筋总重(kg)：279.703</span>
  </div>
  <table class="table dtb">
    <colgroup><col class="c1"><col class="c2"><col class="c3"><col class="c4"><col class="c5"><col class="c6"><col class="c7"><col class="c8"><col class="c9"><col class="c10"><col class="c11"><col class="c12"><col class="c13"><col class="c14"><col class="c15"><col class="c16"></colgroup>
    <thead><tr><th></th><th class="hd-on">筋号</th><th>直径(mm)</th><th>级别</th><th>图号</th><th>图形</th><th>计算公式</th><th>公式描述</th><th>长度</th><th>根数</th><th>搭接</th><th>损耗(%)</th><th>单重(kg)</th><th>总重(kg)</th><th>钢筋归类</th><th>搭接形式</th></tr></thead>
    <tbody>
      <tr class="cfill"><td class="rn rn-on">1</td><td class="sel-cell">墙身水平钢筋.1</td><td class="mn">16</td><td class="gr"><span class="grade">Φ</span></td><td class="mn">1</td>
        <td class="sh"><svg width="244" height="45" viewBox="0 0 244 45"><text class="shr" x="137" y="27" text-anchor="middle">12180</text><path d="M20 33h219" stroke="#111" stroke-width="2"/></svg></td>
        <td class="mn">10900+40*d+40*d</td><td>净长+锚固+锚固</td><td class="mn">12180</td><td class="mn">8</td><td class="mn">1</td><td class="mn">0</td><td class="mn">19.244</td><td class="mn">153.952</td><td class="nw">直筋</td><td class="nw">直螺纹连接</td></tr>
      <tr class="cfill"><td class="rn">2</td><td>墙身水平钢筋.2</td><td class="mn">16</td><td class="gr"><span class="grade">Φ</span></td><td class="mn">64</td>
        <td class="sh"><svg width="244" height="45" viewBox="0 0 244 45"><text class="sht" x="17" y="27">160</text><text class="shr" x="130" y="27" text-anchor="middle">12470</text><text class="sht" x="218" y="27">160</text><path d="M45 15v18h169V15" stroke="#111" stroke-width="2"/></svg></td>
        <td class="mn">12500-15+10*d-15+10*d</td><td>净长-保护层+设定弯折-保护层+设定弯折</td><td class="mn">12790</td><td class="mn">2</td><td class="mn">1</td><td class="mn">0</td><td class="mn">20.208</td><td class="mn">40.416</td><td class="nw">直筋</td><td class="nw">直螺纹连接</td></tr>
      <tr class="cfill"><td class="rn">3</td><td>墙在基础左侧水平筋.1</td><td class="mn">16</td><td class="gr"><span class="grade">Φ</span></td><td class="mn">64</td>
        <td class="sh"><svg width="244" height="45" viewBox="0 0 244 45"><text class="sht" x="17" y="27">160</text><text class="shr" x="130" y="27" text-anchor="middle">12470</text><text class="sht" x="218" y="27">160</text><path d="M45 15v18h169V15" stroke="#111" stroke-width="2"/></svg></td>
        <td class="mn">12500-15+10*d-15+10*d</td><td>净长-保护层+设定弯折-保护层+设定弯折</td><td class="mn">12790</td><td class="mn">2</td><td class="mn">1</td><td class="mn">0</td><td class="mn">20.208</td><td class="mn">40.416</td><td class="nw">直筋</td><td class="nw">直螺纹连接</td></tr>
      <tr class="cfill"><td class="rn">4</td><td>墙在基础右侧水平筋.1</td><td class="mn">16</td><td class="gr"><span class="grade">Φ</span></td><td class="mn">64</td>
        <td class="sh"><svg width="244" height="45" viewBox="0 0 244 45"><text class="sht" x="17" y="27">160</text><text class="shr" x="130" y="27" text-anchor="middle">12470</text><text class="sht" x="218" y="27">160</text><path d="M45 15v18h169V15" stroke="#111" stroke-width="2"/></svg></td>
        <td class="mn">12500-15+10*d-15+10*d</td><td>净长-保护层+设定弯折-保护层+设定弯折</td><td class="mn">12790</td><td class="mn">2</td><td class="mn">1</td><td class="mn">0</td><td class="mn">20.208</td><td class="mn">40.416</td><td class="nw">直筋</td><td class="nw">直螺纹连接</td></tr>
      <tr class="cfill"><td class="rn">5</td><td class="mn">1</td><td class="mn">16</td><td class="gr"><span class="grade">Φ</span></td><td class="mn">63</td>
        <td class="sh"><svg width="244" height="45" viewBox="0 0 244 45"><text class="shr" x="18" y="31">500</text><text class="sht" x="146" y="25" text-anchor="middle">1850</text><path d="M52 12v22h187V12" stroke="#111" stroke-width="2"/></svg></td>
        <td class="mn">1850+2*500</td><td></td><td class="mn">2850</td><td class="mn">1</td><td class="mn">0</td><td class="mn">0</td><td class="mn">4.503</td><td class="mn">4.503</td><td class="nw">直筋</td><td class="nw red">电渣压力焊</td></tr>
      <tr class="blank"><td class="rn">6</td><td></td><td></td><td></td><td></td><td></td><td></td><td></td><td></td><td></td><td></td><td></td><td></td><td></td><td></td><td></td></tr>
    </tbody>
  </table>
</div>

<svg class="marks" viewBox="0 0 1824 1053">
  <path d="M55 681C65 677 75 678 83 679C95 680 105 680 117 681C127 683 135 688 147 688C165 690 180 689 200 688C220 689 240 689 257 689C263 688 267 686 267 683C266 678 262 676 258 674C250 670 245 667 240 664.600C232 660 222 656 213 654C200 652 190 652 180 652.500C168 653 158 655 150 659C143 663 141 668 141 674C141 680 143 685 147 688" stroke="#e0161a" stroke-width="3.500" stroke-linecap="round"/>
  <path d="M567 702C585 700 597 704 605 716C615 730 622 742 628 753C638 772 645 790 648 803C652 818 653 825 652 833C651 848 650 858 644 867C636 880 628 890 620 895C608 902 596 904 583 905C565 906 548 906 530 905C518 902 510 880 508 849C508 830 512 810 518 791C524 770 532 745 541 727C550 712 558 703 572 698" stroke="#e0161a" stroke-width="4" stroke-linecap="round"/>
</svg>
<div class="wmark"><div class="wm1">激活 Windows</div><div class="wm2">转到"设置"以激活 Windows。</div></div>

<script src="https://cdn.jsdelivr.net/npm/bootstrap@5.3.0/dist/js/bootstrap.bundle.min.js"></script>
</body>
</html>
